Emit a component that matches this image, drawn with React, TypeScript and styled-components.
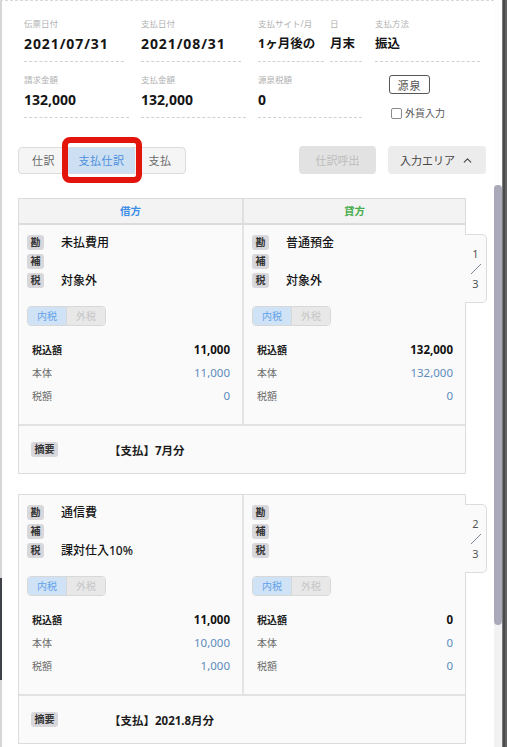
import React from "react";
import styled, { createGlobalStyle } from "styled-components";
import { ChevronUp } from "lucide-react";

const GlobalStyle = createGlobalStyle`
  html, body {
    margin: 0;
    padding: 0;
    height: 100%;
    overflow: hidden;
    background: #fff;
  }
  body {
    font-family: "Noto Sans", "Noto Sans CJK JP", sans-serif;
    color: #222;
  }
`;

const Screen = styled.div`
  position: relative;
  display: flex;
  width: 507px;
  height: 747px;
  /* dark edge of the window behind */
  &::before {
    content: "";
    position: absolute;
    left: 0;
    top: 578px;
    width: 2px;
    height: 102px;
    background: #3f4347;
  }
`;

const Panel = styled.div`
  flex: 0 0 494px;
  box-sizing: border-box;
  border-left: 2px solid #d6d6d6;
  border-top: 1px dashed #d8d8d8;
  overflow: hidden;
`;

const ScrollTrack = styled.div`
  flex: 0 0 8px;
  padding-top: 185px;
  background: linear-gradient(#fdfdfd 0 185px, #f2f2f2 185px);
`;

const Thumb = styled.div`
  height: 440px;
  border-radius: 4px;
  background: #a9a9b9;
`;

const WindowEdge = styled.div`
  flex: 0 0 5px;
  background: linear-gradient(to right, #7b7b7b 0 1px, #4b4b4b 1px 3px, #636363 3px);
`;

/* ---------- slip header ---------- */

const Header = styled.div`
  display: flex;
  flex-direction: column;
  row-gap: 12px;
  padding: 17px 0 0 22px;
`;

const FieldRow = styled.div`
  display: flex;
  align-items: flex-start;
  height: 44px;
`;

const Field = styled.div<{ $w: number; $gap?: number }>`
  width: ${(p) => p.$w}px;
  margin-right: ${(p) => p.$gap ?? 0}px;
  border-bottom: 1px dashed #d2d2d2;
  padding-bottom: 8px;
`;

const Label = styled.div`
  font-size: 8.5px;
  line-height: 12px;
  color: #b0b0b0;
  white-space: nowrap;
`;

const Value = styled.div<{ $jp?: boolean; $ls?: number }>`
  margin-top: 5px;
  height: 18px;
  line-height: 18px;
  font-size: ${(p) => (p.$jp ? "12.5px" : "14px")};
  font-weight: 700;
  letter-spacing: ${(p) => p.$ls ?? 0}px;
  color: #151515;
  white-space: nowrap;
`;

const SideBox = styled.div`
  display: flex;
  flex-direction: column;
  align-items: flex-start;
  padding-top: 1px;
`;

const OutlineButton = styled.button`
  width: 41px;
  height: 19px;
  padding: 0;
  border: 1px solid #555;
  border-radius: 3px;
  background: #fff;
  font-family: inherit;
  font-size: 11px;
  letter-spacing: 1px;
  color: #555;
`;

const CheckRow = styled.label`
  display: flex;
  align-items: center;
  gap: 3px;
  margin: 13px 0 0 2px;
  font-size: 10px;
  line-height: 12px;
  color: #555;
`;

const Box = styled.span`
  width: 9px;
  height: 9px;
  border: 1px solid #8a8a8a;
  border-radius: 2px;
  background: #fff;
`;

/* ---------- toolbar ---------- */

const Toolbar = styled.div`
  display: flex;
  align-items: center;
  margin-top: 28px;
  padding: 0 8px 0 16px;
`;

const Segments = styled.div`
  display: flex;
  box-sizing: border-box;
  height: 27px;
  border: 1px solid #dcdcdc;
  border-radius: 4px;
  background: #f5f5f5;
`;

const Segment = styled.button<{ $w: number; $on?: boolean }>`
  position: relative;
  width: ${(p) => p.$w}px;
  padding: 0;
  border: none;
  background: ${(p) => (p.$on ? "#cde0f3" : "transparent")};
  font-family: inherit;
  font-size: 11px;
  letter-spacing: 0.5px;
  color: ${(p) => (p.$on ? "#4b8fdb" : "#6a6a6a")};
`;

const Highlight = styled.span`
  position: absolute;
  top: -11px;
  bottom: -10px;
  left: -6px;
  right: -7px;
  border: 6px solid #e2140c;
  border-radius: 8px;
  pointer-events: none;
`;

const ToolButton = styled.button<{ $w: number; $disabled?: boolean }>`
  display: flex;
  align-items: center;
  justify-content: center;
  gap: 6px;
  width: ${(p) => p.$w}px;
  height: 28px;
  padding: 0;
  border: none;
  border-radius: 4px;
  background: ${(p) => (p.$disabled ? "#e2e2e2" : "#ececec")};
  font-family: inherit;
  font-size: 11px;
  color: ${(p) => (p.$disabled ? "#bdbdbd" : "#444")};
`;

const Spacer = styled.div`
  flex: 1;
`;

/* ---------- journal table ---------- */

const Table = styled.div`
  display: flex;
  flex-direction: column;
  row-gap: 20px;
  margin-top: 24px;
  padding: 0 28px 0 16px;
`;

const HeadRow = styled.div`
  display: grid;
  grid-template-columns: 1fr 1fr;
  border: 1px solid #dcdcdc;
  border-bottom-width: 2px;
  background: #f3f3f3;
`;

const Head = styled.div<{ $color: string }>`
  height: 24px;
  line-height: 24px;
  text-align: center;
  font-size: 10.5px;
  font-weight: 700;
  color: ${(p) => p.$color};
  & + & {
    border-left: 2px solid #e0e0e0;
  }
`;

const Entry = styled.div<{ $first?: boolean }>`
  position: relative;
  border: 1px solid #dcdcdc;
  border-top-width: ${(p) => (p.$first ? 0 : 1)}px;
  background: #fafafa;
`;

const Sides = styled.div`
  display: grid;
  grid-template-columns: 1fr 1fr;
  border-bottom: 2px solid #e2e2e2;
`;

const Side = styled.div`
  padding: 10px 8px 17px;
  & + & {
    border-left: 2px solid #e4e4e4;
  }
`;

const AcctRows = styled.div`
  display: flex;
  flex-direction: column;
  row-gap: 4px;
`;

const AcctRow = styled.div`
  display: grid;
  grid-template-columns: 34px 1fr;
  grid-template-rows: 15px;
  align-items: center;
`;

const Tag = styled.span<{ $w?: number }>`
  width: ${(p) => p.$w ?? 17}px;
  height: 15px;
  line-height: 15px;
  border-radius: 3px;
  background: #d7d7dc;
  text-align: center;
  font-size: 10px;
  font-weight: 700;
  color: #333;
`;

const AcctName = styled.span`
  font-size: 12px;
  line-height: 15px;
  font-weight: 500;
  color: #151515;
  white-space: nowrap;
`;

const TaxToggle = styled.div`
  display: flex;
  width: 79px;
  height: 20px;
  margin-top: 18px;
  box-sizing: border-box;
  border: 1px solid #d8d8d8;
  border-radius: 4px;
  overflow: hidden;
`;

const TaxOption = styled.span<{ $on?: boolean }>`
  flex: 1;
  line-height: 18px;
  text-align: center;
  font-size: 10px;
  background: ${(p) => (p.$on ? "#cfe2f6" : "#e8e8e8")};
  color: ${(p) => (p.$on ? "#63a2e8" : "#c6c6c6")};
  & + & {
    border-left: 1px solid #d8d8d8;
  }
`;

const Amounts = styled.div`
  margin-top: 12px;
  padding: 0 4px 0 5px;
`;

const AmountRow = styled.div<{ $strong?: boolean }>`
  display: flex;
  justify-content: space-between;
  align-items: center;
  height: 23px;
  font-size: 10px;
  font-weight: ${(p) => (p.$strong ? 700 : 400)};
  color: ${(p) => (p.$strong ? "#1e1e1e" : "#6a6a6a")};
`;

const Amount = styled.span<{ $strong?: boolean }>`
  font-size: 11.5px;
  color: ${(p) => (p.$strong ? "#111" : "#5d8cbd")};
`;

const MemoRow = styled.div`
  display: grid;
  grid-template-columns: 82px 1fr;
  align-items: center;
  height: 47px;
  padding-left: 12px;
`;

const MemoText = styled.span`
  font-size: 11.5px;
  font-weight: 700;
  color: #1c1c1c;
  margin-left: -4px;
`;

const PageTab = styled.div`
  position: absolute;
  top: 9px;
  left: 100%;
  display: flex;
  flex-direction: column;
  align-items: center;
  box-sizing: border-box;
  width: 22px;
  height: 69px;
  padding-top: 11px;
  border: 1px solid #dcdcdc;
  border-left: none;
  border-radius: 0 5px 5px 0;
  background: #fafafa;
  font-size: 11px;
  color: #555;
`;

const PageNum = styled.span`
  line-height: 16px;
`;

type SideData = {
  acct: string;
  tax: string;
  total: string;
  body: string;
  taxAmt: string;
};

type EntryData = {
  page: number;
  debit: SideData;
  credit: SideData;
  memo: string;
};

const entries: EntryData[] = [
  {
    page: 1,
    debit: { acct: "未払費用", tax: "対象外", total: "11,000", body: "11,000", taxAmt: "0" },
    credit: { acct: "普通預金", tax: "対象外", total: "132,000", body: "132,000", taxAmt: "0" },
    memo: "【支払】7月分",
  },
  {
    page: 2,
    debit: { acct: "通信費", tax: "課対仕入10%", total: "11,000", body: "10,000", taxAmt: "1,000" },
    credit: { acct: "", tax: "", total: "0", body: "0", taxAmt: "0" },
    memo: "【支払】2021.8月分",
  },
];

const TOTAL_PAGES = 3;

const SideCell = ({ d }: { d: SideData }) => (
  <Side>
    <AcctRows>
      <AcctRow>
        <Tag>勘</Tag>
        <AcctName>{d.acct}</AcctName>
      </AcctRow>
      <AcctRow>
        <Tag>補</Tag>
        <AcctName />
      </AcctRow>
      <AcctRow>
        <Tag>税</Tag>
        <AcctName>{d.tax}</AcctName>
      </AcctRow>
    </AcctRows>
    <TaxToggle>
      <TaxOption $on>内税</TaxOption>
      <TaxOption>外税</TaxOption>
    </TaxToggle>
    <Amounts>
      <AmountRow $strong>
        税込額<Amount $strong>{d.total}</Amount>
      </AmountRow>
      <AmountRow>
        本体<Amount>{d.body}</Amount>
      </AmountRow>
      <AmountRow>
        税額<Amount>{d.taxAmt}</Amount>
      </AmountRow>
    </Amounts>
  </Side>
);

const JournalEntry = ({ e, first }: { e: EntryData; first?: boolean }) => (
  <Entry $first={first}>
    <Sides>
      <SideCell d={e.debit} />
      <SideCell d={e.credit} />
    </Sides>
    <MemoRow>
      <Tag $w={27}>摘要</Tag>
      <MemoText>{e.memo}</MemoText>
    </MemoRow>
    <PageTab>
      <PageNum>{e.page}</PageNum>
      <svg width="12" height="12" viewBox="0 0 12 12" style={{ margin: "1px 0" }}>
        <line x1="1" y1="11" x2="11" y2="1" stroke="#6f7590" strokeWidth="0.9" />
      </svg>
      <PageNum>{TOTAL_PAGES}</PageNum>
    </PageTab>
  </Entry>
);

export default function App() {
  return (
    <>
      <GlobalStyle />
      <Screen>
        <Panel>
          <Header>
            <FieldRow>
              <Field $w={100} $gap={17}>
                <Label>伝票日付</Label>
                <Value $ls={0.9}>2021/07/31</Value>
              </Field>
              <Field $w={100} $gap={17}>
                <Label>支払日付</Label>
                <Value $ls={0.9}>2021/08/31</Value>
              </Field>
              <Field $w={66} $gap={6}>
                <Label>支払サイト/月</Label>
                <Value $jp>1ヶ月後の</Value>
              </Field>
              <Field $w={32} $gap={13}>
                <Label>日</Label>
                <Value $jp>月末</Value>
              </Field>
              <Field $w={105}>
                <Label>支払方法</Label>
                <Value $jp>振込</Value>
              </Field>
            </FieldRow>
            <FieldRow>
              <Field $w={105} $gap={12}>
                <Label>請求金額</Label>
                <Value>132,000</Value>
              </Field>
              <Field $w={105} $gap={12}>
                <Label>支払金額</Label>
                <Value>132,000</Value>
              </Field>
              <Field $w={104} $gap={27}>
                <Label>源泉税額</Label>
                <Value>0</Value>
              </Field>
              <SideBox>
                <OutlineButton>源泉</OutlineButton>
                <CheckRow>
                  <Box />
                  外貨入力
                </CheckRow>
              </SideBox>
            </FieldRow>
          </Header>

          <Toolbar>
            <Segments>
              <Segment $w={49}>仕訳</Segment>
              <Segment $w={67} $on>
                支払仕訳
                <Highlight />
              </Segment>
              <Segment $w={50}>支払</Segment>
            </Segments>
            <Spacer />
            <ToolButton $w={77} $disabled>
              仕訳呼出
            </ToolButton>
            <ToolButton $w={98} style={{ marginLeft: 12 }}>
              入力エリア
              <ChevronUp size={13} strokeWidth={2} />
            </ToolButton>
          </Toolbar>

          <Table>
            <div>
              <HeadRow>
                <Head $color="#3d8ee6">借方</Head>
                <Head $color="#4aad4e">貸方</Head>
              </HeadRow>
              <JournalEntry e={entries[0]} first />
            </div>
            <JournalEntry e={entries[1]} />
          </Table>
        </Panel>
        <ScrollTrack>
          <Thumb />
        </ScrollTrack>
        <WindowEdge />
      </Screen>
    </>
  );
}
